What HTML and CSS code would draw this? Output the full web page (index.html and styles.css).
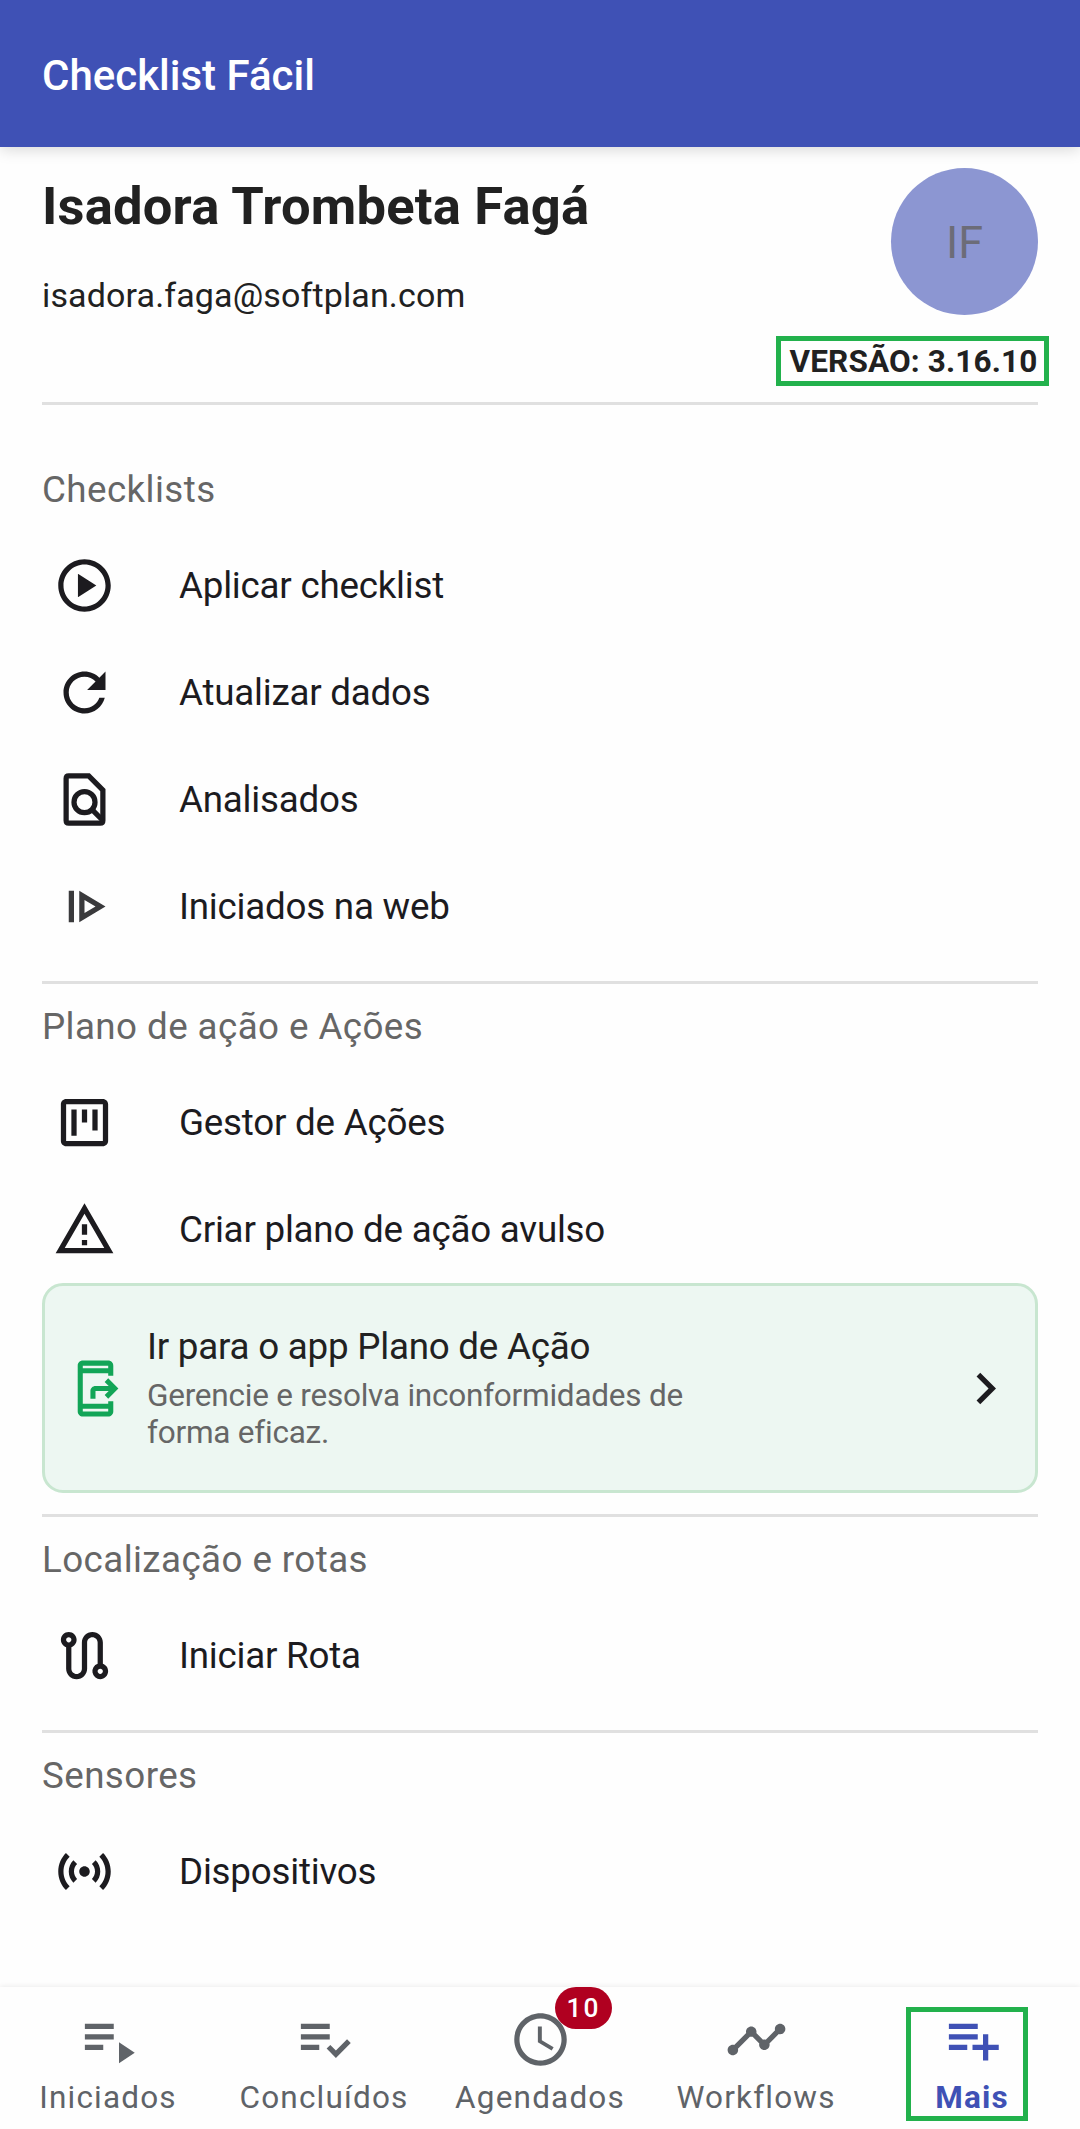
FILE: index.html
```html
<!DOCTYPE html>
<html lang="pt-BR">
<head>
<meta charset="utf-8">
<title>Checklist Fácil</title>
<link rel="stylesheet" href="styles.css">
</head>
<body>
<div class="screen">
  <header class="app-bar"><h1 class="app-title">Checklist Fácil</h1></header>

  <main class="content">
    <section class="profile">
      <div class="profile-info">
        <h2 class="profile-name">Isadora Trombeta Fagá</h2>
        <p class="profile-email">isadora.faga@softplan.com</p>
      </div>
      <div class="profile-side">
        <div class="avatar"><span class="initials">IF</span></div>
        <div class="version"><span>VERSÃO: 3.16.10</span></div>
      </div>
    </section>

    <section class="group group-first">
      <h3 class="group-title">Checklists</h3>
      <a class="item"><svg class="icon" viewBox="0 0 24 24"><path d="M9.5 16.5l7-4.5-7-4.5zM12 2C6.48 2 2 6.48 2 12s4.48 10 10 10 10-4.48 10-10S17.52 2 12 2zm0 18c-4.41 0-8-3.59-8-8s3.59-8 8-8 8 3.59 8 8-3.59 8-8 8z"/></svg><span>Aplicar checklist</span></a>
      <a class="item"><svg class="icon" viewBox="0 0 24 24"><path d="M17.65 6.35C16.2 4.9 14.21 4 12 4c-4.42 0-7.99 3.58-7.99 8s3.57 8 7.99 8c3.73 0 6.84-2.55 7.73-6h-2.08c-.82 2.33-3.04 4-5.65 4-3.31 0-6-2.69-6-6s2.69-6 6-6c1.66 0 3.14.69 4.22 1.78L13 11h7V4z"/></svg><span>Atualizar dados</span></a>
      <a class="item"><svg class="icon line" viewBox="0 0 24 24"><path d="M6 3h7.6L19 8.4V20q0 1-1 1H6q-1 0-1-1V4q0-1 1-1z"/><circle cx="12" cy="13" r="4"/><path d="M14.8 15.8L19 20"/></svg><span>Analisados</span></a>
      <a class="item"><svg class="icon soft" viewBox="0 0 24 24"><path fill-rule="evenodd" d="M6 6h2v12H6zM10 6l10 6-10 6zM12 9.5v5l4.2-2.5z"/></svg><span>Iniciados na web</span></a>
    </section>

    <section class="group">
      <h3 class="group-title">Plano de ação e Ações</h3>
      <a class="item"><svg class="icon" viewBox="0 0 24 24"><path fill-rule="evenodd" d="M5 3h14c1.1 0 2 .9 2 2v14c0 1.1-.9 2-2 2H5c-1.1 0-2-.9-2-2V5c0-1.1.9-2 2-2zM5 5v14h14V5zM7 7h2v10H7zM11 7h2v5h-2zM15 7h2v8h-2z"/></svg><span>Gestor de Ações</span></a>
      <a class="item"><svg class="icon" viewBox="0 0 24 24"><path d="M12 5.99L19.53 19H4.47L12 5.99M12 2L1 21h22L12 2zm1 14h-2v2h2v-2zm0-6h-2v4h2v-4z"/></svg><span>Criar plano de ação avulso</span></a>
      <a class="card">
        <svg class="icon card-icon" viewBox="0 0 24 24"><path d="M17 18H7V6h10v1h2V3c0-1.1-.9-2-2-2H7c-1.1 0-2 .9-2 2v18c0 1.1.9 2 2 2h10c1.1 0 2-.9 2-2v-4h-2zM7 3h10v1H7zm10 18H7v-1h10zM17 8l-1.4 1.4 1.6 1.6H12c-1.1 0-2 .9-2 2v3h2v-3h5.2l-1.6 1.6L17 16l4-4z"/></svg>
        <div class="card-text">
          <strong class="card-title">Ir para o app Plano de Ação</strong>
          <p class="card-sub">Gerencie e resolva inconformidades de forma eficaz.</p>
        </div>
        <svg class="icon" viewBox="0 0 24 24"><path d="M8.59 16.59L13.17 12 8.59 7.41 10 6l6 6-6 6z"/></svg>
      </a>
    </section>

    <section class="group">
      <h3 class="group-title">Localização e rotas</h3>
      <a class="item"><svg class="icon" viewBox="0 0 24 24"><path d="M19 15.18V7c0-2.21-1.79-4-4-4s-4 1.79-4 4v10c0 1.1-.9 2-2 2s-2-.9-2-2V8.82C8.16 8.4 9 7.3 9 6c0-1.66-1.34-3-3-3S3 4.34 3 6c0 1.3.84 2.4 2 2.82V17c0 2.21 1.79 4 4 4s4-1.79 4-4V7c0-1.1.9-2 2-2s2 .9 2 2v8.18A2.996 2.996 0 0 0 18 21c1.66 0 3-1.34 3-3 0-1.3-.84-2.4-2-2.82zM6 7c-.55 0-1-.45-1-1s.45-1 1-1 1 .45 1 1-.45 1-1 1zm12 12c-.55 0-1-.45-1-1s.45-1 1-1 1 .45 1 1-.45 1-1 1z"/></svg><span>Iniciar Rota</span></a>
    </section>

    <section class="group">
      <h3 class="group-title">Sensores</h3>
      <a class="item"><svg class="icon" viewBox="0 0 24 24"><path d="M7.76 16.24C6.67 15.16 6 13.66 6 12s.67-3.16 1.76-4.24l1.42 1.42C8.45 9.9 8 10.9 8 12c0 1.1.45 2.1 1.17 2.83zm8.48 0C17.33 15.16 18 13.66 18 12s-.67-3.16-1.76-4.24l-1.42 1.42C15.55 9.9 16 10.9 16 12c0 1.1-.45 2.1-1.17 2.83zM12 10c-1.1 0-2 .9-2 2s.9 2 2 2 2-.9 2-2-.9-2-2-2zm8 2c0 2.21-.9 4.21-2.35 5.65l1.42 1.42C20.88 17.26 22 14.76 22 12s-1.12-5.26-2.93-7.07l-1.42 1.42C19.1 7.79 20 9.79 20 12zM6.35 6.35L4.93 4.93C3.12 6.74 2 9.24 2 12s1.12 5.26 2.93 7.07l1.42-1.42C4.9 16.21 4 14.21 4 12s.9-4.21 2.35-5.65z"/></svg><span>Dispositivos</span></a>
    </section>
  </main>

  <nav class="bottom-nav">
    <a class="tab"><svg class="icon" viewBox="0 0 24 24"><path d="M3 10h11v2H3zM3 6h11v2H3zM3 14h7v2H3zM16 13v8l6-4z"/></svg><span>Iniciados</span></a>
    <a class="tab"><svg class="icon" viewBox="0 0 24 24"><path d="M3 10h11v2H3zM3 6h11v2H3zM3 14h7v2H3zM20.59 11.93l-4.25 4.24-2.12-2.12-1.41 1.41L16.34 19 22 13.34z"/></svg><span>Concluídos</span></a>
    <a class="tab"><svg class="icon" viewBox="0 0 24 24"><path d="M11.99 2C6.47 2 2 6.48 2 12s4.47 10 9.99 10C17.52 22 22 17.52 22 12S17.52 2 11.99 2zM12 20c-4.42 0-8-3.58-8-8s3.58-8 8-8 8 3.58 8 8-3.58 8-8 8zm.5-13H11v6l5.25 3.15.75-1.23-4.5-2.67z"/></svg><b class="badge">10</b><span>Agendados</span></a>
    <a class="tab"><svg class="icon" viewBox="0 0 24 24"><path d="M23 8c0 1.1-.9 2-2 2-.18 0-.35-.02-.51-.07l-3.56 3.55c.05.16.07.34.07.52 0 1.1-.9 2-2 2s-2-.9-2-2c0-.18.02-.36.07-.52l-2.55-2.55c-.16.05-.34.07-.52.07s-.36-.02-.52-.07l-4.55 4.56c.05.16.07.33.07.51 0 1.1-.9 2-2 2s-2-.9-2-2 .9-2 2-2c.18 0 .35.02.51.07l4.56-4.55C8.02 9.36 8 9.18 8 9c0-1.1.9-2 2-2s2 .9 2 2c0 .18-.02.36-.07.52l2.55 2.55c.16-.05.34-.07.52-.07s.36.02.52.07l3.55-3.56C19.02 8.35 19 8.18 19 8c0-1.1.9-2 2-2s2 .9 2 2z"/></svg><span>Workflows</span></a>
    <a class="tab active"><svg class="icon" viewBox="0 0 24 24"><path d="M14 10H3v2h11zM14 6H3v2h11zM18 14v-4h-2v4h-4v2h4v4h2v-4h4v-2zM3 16h7v-2H3z"/></svg><span>Mais</span><i class="highlight"></i></a>
  </nav>
</div>
</body>
</html>
```
FILE: styles.css
```css
* { box-sizing: border-box; }
body, h1, h2, h3, p { margin: 0; }
body {
  background: #fefefe;
  color: #1c1b1f;
  font-family: Roboto, "Liberation Sans", sans-serif;
  font-size: 36.75px;
}
.screen { display: flex; flex-direction: column; height: 2129px; overflow: hidden; }

.app-bar {
  display: flex;
  align-items: center;
  height: 147px;
  flex: none;
  padding: 0 42px;
  background: #3f51b5;
  box-shadow: 0 3px 14px rgba(0, 0, 0, .15);
}
.app-title { color: #fff; font-size: 42px; line-height: 50px; font-weight: 500; padding-top: 4px; }

.content { flex: 1; padding: 0 42px; min-height: 0; }
.profile {
  display: flex;
  justify-content: space-between;
  height: 258px;
  padding-top: 21px;
  border-bottom: 3px solid #e0e0e0;
  color: #212121;
}
.profile-name { margin-top: 6px; font-size: 52.5px; line-height: 64px; font-weight: 700; letter-spacing: .2px; }
.profile-email { margin-top: 37px; font-size: 34px; line-height: 40px; letter-spacing: .13px; }
.profile-side { display: flex; flex-direction: column; align-items: flex-end; gap: 21px; }
.avatar {
  display: flex;
  align-items: center;
  justify-content: center;
  width: 147px;
  height: 147px;
  border-radius: 50%;
  background: #8c96d2;
  color: #6c6c78;
  font-size: 45px;
}
.initials { padding-top: 2px; }
.version {
  display: flex;
  align-items: center;
  justify-content: center;
  width: 273px;
  height: 50px;
  flex: none;
  margin-right: -11px;
  padding-left: 2px;
  border: 5px solid #22b14c;
  font-size: 31.5px;
  font-weight: 700;
  letter-spacing: .15px;
  white-space: nowrap;
}

.group { border-bottom: 3px solid #e0e0e0; padding-bottom: 21px; }
.group:last-child { border-bottom: 0; }
.group-first { padding-top: 42px; }
.group-title {
  height: 85px;
  padding-top: 21px;
  color: #666;
  font-size: 36.75px;
  line-height: 44px;
  font-weight: 400;
  letter-spacing: .42px;
}
.item { display: flex; align-items: center; height: 107px; padding-left: 11px; letter-spacing: -.23px; }
.icon { width: 63px; height: 63px; flex: none; fill: currentColor; }
.line { fill: none; stroke: currentColor; stroke-width: 2; }
.soft { color: #3a3a3c; }
.item span { margin-left: 63px; }

.card {
  display: flex;
  align-items: center;
  height: 210px;
  padding: 0 18px 0 20px;
  border: 3px solid #c8e6d0;
  border-radius: 21px;
  background: #edf7f2;
  letter-spacing: -.23px;
}
.card-icon { width: 61px; height: 61px; color: #12a557; }
.card-text { flex: 1; margin-left: 21px; }
.card-title { display: block; color: #212121; font-weight: 400; line-height: 44px; }
.card-sub { width: 560px; margin-top: 8px; color: #666; font-size: 31.5px; line-height: 37px; }

.bottom-nav {
  display: flex;
  height: 142px;
  flex: none;
  background: #fefefe;
  box-shadow: 0 -1px 5px rgba(0, 0, 0, .07);
  color: #5f6368;
}
.tab {
  position: relative;
  display: flex;
  flex: 1;
  flex-direction: column;
  align-items: center;
  padding-top: 21px;
  font-size: 31.5px;
  line-height: 36px;
  letter-spacing: 1.18px;
}
.tab span { margin-top: 9px; }
.active { color: #3f51b5; font-weight: 700; }
.badge {
  position: absolute;
  top: 0;
  left: 123px;
  width: 57px;
  height: 42px;
  border-radius: 21px;
  background: #b00020;
  color: #fff;
  font-size: 26.25px;
  line-height: 42px;
  font-weight: 500;
  letter-spacing: 2px;
  text-align: center;
}
.highlight { position: absolute; left: 42px; top: 20px; width: 122px; height: 114px; border: 5px solid #22b14c; }
```
